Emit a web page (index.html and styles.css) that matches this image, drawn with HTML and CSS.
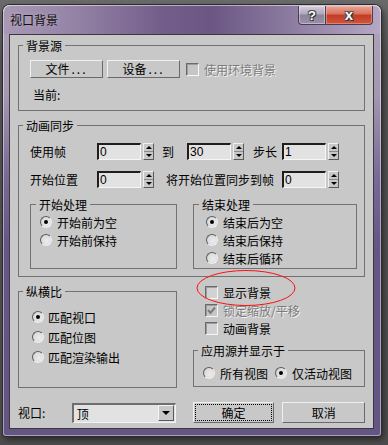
FILE: index.html
```html
<!DOCTYPE html>
<html>
<head>
<meta charset="utf-8">
<link rel="stylesheet" href="styles.css">
</head>
<body>
<div class="win">
  <div class="titlebar">
    <span class="ttext">视口背景</span>
    <div class="tbtns">
      <div class="tb help">?</div>
      <div class="tb close">x</div>
    </div>
  </div>
  <div class="client">
    <div class="group g1">
      <div class="gtitle">背景源</div>
      <div class="btnrow">
        <div class="btn w73">文件<span class="dots">...</span></div>
        <div class="btn w73 ml4">设备<span class="dots">...</span></div>
        <div class="chk dis ml6"><span class="box"></span><span class="lbl">使用环境背景</span></div>
      </div>
      <div class="current">当前:</div>
    </div>

    <div class="group g2">
      <div class="gtitle">动画同步</div>
      <div class="srow">
        <span class="lbl1">使用帧</span>
        <div class="spin"><div class="field">0</div><div class="arrows"><span class="half"><i class="up"></i></span><span class="half"><i class="dn"></i></span></div></div>
        <span class="to">到</span>
        <div class="spin"><div class="field">30</div><div class="arrows"><span class="half"><i class="up"></i></span><span class="half"><i class="dn"></i></span></div></div>
        <span class="step">步长</span>
        <div class="spin"><div class="field">1</div><div class="arrows"><span class="half"><i class="up"></i></span><span class="half"><i class="dn"></i></span></div></div>
      </div>
      <div class="srow r2">
        <span class="lbl1">开始位置</span>
        <div class="spin"><div class="field">0</div><div class="arrows"><span class="half"><i class="up"></i></span><span class="half"><i class="dn"></i></span></div></div>
        <span class="sync">将开始位置同步到帧</span>
        <div class="spin"><div class="field">0</div><div class="arrows"><span class="half"><i class="up"></i></span><span class="half"><i class="dn"></i></span></div></div>
      </div>
      <div class="subs">
        <div class="group sub s1">
          <div class="gtitle">开始处理</div>
          <div class="rlist">
            <div class="rrow"><span class="radio on"></span><span>开始前为空</span></div>
            <div class="rrow"><span class="radio"></span><span>开始前保持</span></div>
          </div>
        </div>
        <div class="group sub s2">
          <div class="gtitle">结束处理</div>
          <div class="rlist">
            <div class="rrow"><span class="radio on"></span><span>结束后为空</span></div>
            <div class="rrow"><span class="radio"></span><span>结束后保持</span></div>
            <div class="rrow"><span class="radio"></span><span>结束后循环</span></div>
          </div>
        </div>
      </div>
    </div>

    <div class="row3">
      <div class="group g3">
        <div class="gtitle">纵横比</div>
        <div class="rlist">
          <div class="rrow"><span class="radio on"></span><span>匹配视口</span></div>
          <div class="rrow"><span class="radio"></span><span>匹配位图</span></div>
          <div class="rrow"><span class="radio"></span><span>匹配渲染输出</span></div>
        </div>
      </div>
      <div class="rcol">
        <div class="crow"><span class="box"></span><span>显示背景</span></div>
        <div class="crow dis"><span class="box"><svg width="11" height="11" viewBox="0 0 11 11"><path d="M2 5 L4.5 8 L9 2.5" fill="none" stroke="#7c7c7c" stroke-width="2"/></svg></span><span class="lbl">锁定缩放/平移</span></div>
        <div class="crow"><span class="box"></span><span>动画背景</span></div>
        <div class="group g4">
          <div class="gtitle">应用源并显示于</div>
          <div class="rrow r4">
            <span class="radio"></span><span>所有视图</span>
            <span class="radio on ml7"></span><span>仅活动视图</span>
          </div>
        </div>
      </div>
    </div>

    <div class="bottom">
      <span class="vlbl">视口:</span>
      <div class="combo"><span class="ctext">顶</span><span class="cbtn"><i class="dn2"></i></span></div>
      <div class="btn ok">确定</div>
      <div class="btn cancel">取消</div>
    </div>

    <svg class="ellipse" width="100" height="37" viewBox="0 0 100 37"><ellipse cx="50" cy="18" rx="49" ry="17.5" fill="none" stroke="#ff1010" stroke-width="1"/></svg>
  </div>
</div>
</body>
</html>
```

FILE: styles.css
```css
html, body {
  margin: 0;
  padding: 0;
}
body {
  width: 388px;
  height: 445px;
  overflow: hidden;
  background: linear-gradient(to bottom, #6a6a6a 0, #555 60px, #4c4c4c 100%);
  font-family: "Noto Sans CJK SC", sans-serif;
  font-size: 12px;
  color: #000;
}
.win {
  position: relative;
  margin: 5px 0 0 3px;
  width: 378px;
  height: 431px;
  box-sizing: border-box;
  padding: 0 7px 0 6px;
  border-radius: 7px 7px 3px 3px;
  background: linear-gradient(to bottom, #b0a4bc 0, #a497b1 90px, #7a6a98 170px, #665688 240px, #655585 100%);
  box-shadow: 0 0 0 1px #2c2c2c, inset 0 0 0 1px rgba(255,255,255,0.45), 2px 3px 6px rgba(0,0,0,0.55);
}
.titlebar {
  height: 29px;
  display: flex;
  justify-content: space-between;
  align-items: flex-start;
  margin: 0 -7px 0 -6px;
  padding: 0 8px 0 7px;
  border-radius: 7px 7px 0 0;
  background: linear-gradient(to right, #a898b5 0%, #9684a7 18%, #735e8b 42%, #6b5684 55%, #8b7a9f 75%, #a595b6 90%, #b6a8c4 100%);
  box-shadow: inset 0 1px 0 rgba(255,255,255,0.5), inset 1px 0 0 rgba(255,255,255,0.4), inset -1px 0 0 rgba(255,255,255,0.4);
}
.ttext {
  margin-top: 8px;
  line-height: 14px;
  color: #111;
  text-shadow: 0 0 4px rgba(255,255,255,0.35);
}
.tbtns {
  display: flex;
  margin-top: 1px;
}
.tb {
  height: 19px;
  box-sizing: border-box;
  display: flex;
  align-items: center;
  justify-content: center;
  color: #fff;
  font-family: "Liberation Sans", sans-serif;
  font-weight: bold;
  font-size: 13px;
  border: 1px solid #473d55;
  border-top: none;
  text-shadow: 0 0 1px #222, 1px 1px 0 #333, -1px -1px 0 #555, 1px -1px 0 #555, -1px 1px 0 #555;
}
.help {
  width: 28px;
  border-radius: 0 0 0 4px;
  background: linear-gradient(to bottom, #d6cfdd 0, #aea5ba 45%, #8c8299 50%, #9a90aa 100%);
  box-shadow: inset 0 0 0 1px rgba(255,255,255,0.35);
}
.close {
  width: 47px;
  border-left: none;
  border-radius: 0 0 4px 0;
  font-size: 15px;
  line-height: 15px;
  padding-bottom: 2px;
  background: linear-gradient(to bottom, #eaa494 0, #d8705e 45%, #c13c24 50%, #d2553d 100%);
  box-shadow: inset 0 0 0 1px rgba(255,220,210,0.35);
}
.client {
  position: relative;
  height: 395px;
  box-sizing: border-box;
  border: 1px solid #3a3a3a;
  background: #c8c8c8;
  padding: 10px 8px 0 8px;
}
.group {
  box-sizing: border-box;
  border: 1px solid #727272;
}
.gtitle {
  width: max-content;
  margin: -7px 0 0 4px;
  padding: 0 3px;
  background: #c8c8c8;
  line-height: 14px;
  height: 14px;
}
.sub .gtitle {
  margin-left: 5px;
}
.g1 {
  height: 66px;
}
.btnrow {
  display: flex;
  align-items: center;
  height: 18px;
  margin-top: 7px;
  padding-left: 11px;
}
.btn {
  box-sizing: border-box;
  height: 18px;
  display: flex;
  align-items: center;
  justify-content: center;
  border: 1px solid;
  border-color: #f0f0f0 #6a6a6a #6a6a6a #f0f0f0;
  background: #c8c8c8;
  line-height: 14px;
}
.dots {
  letter-spacing: 2px;
  margin-left: 2px;
}
.w73 { width: 73px; }
.ml4 { margin-left: 4px; }
.ml6 { margin-left: 6px; }
.ml7 { margin-left: 7px; }
.chk, .crow {
  display: flex;
  align-items: center;
}
.box {
  width: 13px;
  height: 13px;
  box-sizing: border-box;
  border: 1px solid;
  border-color: #6a6a6a #f6f6f6 #f6f6f6 #6a6a6a;
  box-shadow: inset 1px 1px 0 #9c9c9c;
  background: #d2d2d2;
  margin-right: 5px;
  display: flex;
  align-items: center;
  justify-content: center;
}
.dis .box {
  background: #c6c6c6;
}
.dis .lbl {
  color: #7c7c7c;
  text-shadow: 1px 1px 0 #f2f2f2;
}
.current {
  margin-top: 10px;
  padding-left: 14px;
  line-height: 14px;
}
.g2 {
  margin-top: 14px;
  height: 152px;
}
.srow {
  display: flex;
  align-items: center;
  height: 17px;
  margin-top: 10px;
  padding-left: 11px;
}
.srow.r2 {
  margin-top: 11px;
}
.lbl1 {
  width: 67px;
}
.spin {
  display: flex;
  gap: 2px;
}
.field {
  width: 44px;
  height: 17px;
  box-sizing: border-box;
  border: solid;
  border-width: 2px 1px 1px 2px;
  border-color: #1e1e1e #f6f6f6 #f6f6f6 #1e1e1e;
  background: #e2e2e2;
  font-family: "Liberation Sans", sans-serif;
  font-size: 12px;
  line-height: 14px;
  padding-left: 1px;
}
.arrows {
  width: 11px;
  height: 17px;
  box-sizing: border-box;
  border: 1px solid;
  border-color: #f0f0f0 #5a5a5a #5a5a5a #f0f0f0;
  background: #c8c8c8;
  display: flex;
  flex-direction: column;
}
.half {
  flex: 1;
  display: flex;
  align-items: center;
  justify-content: center;
}
.half + .half {
  border-top: 1px solid #8a8a8a;
}
.up {
  width: 0;
  height: 0;
  border-left: 3px solid transparent;
  border-right: 3px solid transparent;
  border-bottom: 3px solid #000;
}
.dn {
  width: 0;
  height: 0;
  border-left: 3px solid transparent;
  border-right: 3px solid transparent;
  border-top: 3px solid #000;
}
.to {
  margin: 0 13px 0 8px;
}
.step {
  margin: 0 5px 0 9px;
}
.sync {
  margin: 0 8px 0 12px;
}
.subs {
  display: flex;
  gap: 16px;
  margin-top: 16px;
  padding-left: 11px;
}
.s1 {
  width: 147px;
  height: 65px;
}
.s2 {
  width: 164px;
  height: 65px;
}
.rlist {
  margin-top: 1px;
}
.s1 .rlist { padding-left: 9px; }
.s2 .rlist { padding-left: 12px; }
.rrow {
  display: flex;
  align-items: center;
  height: 18px;
}
.radio {
  width: 12px;
  height: 12px;
  box-sizing: border-box;
  border-radius: 50%;
  border: 1px solid;
  border-color: #5c5c5c #eeeeee #eeeeee #5c5c5c;
  background: radial-gradient(circle at 60% 60%, #ececec 0, #dadada 70%);
  margin-right: 5px;
  position: relative;
  flex: none;
}
.radio.on::after {
  content: "";
  position: absolute;
  left: 3px;
  top: 3px;
  width: 4px;
  height: 4px;
  border-radius: 50%;
  background: #000;
}
.row3 {
  display: flex;
  align-items: flex-start;
  margin-top: 6px;
}
.g3 {
  width: 159px;
  height: 97px;
  margin-top: 8px;
}
.g3 .rlist {
  margin-top: 8px;
  padding-left: 13px;
}
.g3 .rrow {
  height: 20px;
}
.g3 .radio {
  margin-right: 4px;
}
.rcol {
  margin-left: 16px;
  width: 172px;
}
.crow {
  height: 18px;
  padding-left: 12px;
}
.g4 {
  margin-top: 13px;
  height: 37px;
}
.r4 {
  margin-top: 6px;
  padding-left: 9px;
}
.bottom {
  display: flex;
  align-items: center;
  height: 21px;
  margin-top: 14px;
}
.vlbl {
  width: 54px;
}
.combo {
  width: 104px;
  height: 20px;
  box-sizing: border-box;
  border: solid;
  border-width: 2px 1px 1px 2px;
  border-color: #6e6e6e #f2f2f2 #f2f2f2 #6e6e6e;
  background: #e2e2e2;
  display: flex;
  align-items: center;
  justify-content: space-between;
  padding: 0 1px 0 3px;
}
.cbtn {
  width: 16px;
  height: 16px;
  box-sizing: border-box;
  border: 1px solid;
  border-color: #f4f4f4 #5a5a5a #5a5a5a #f4f4f4;
  background: #c8c8c8;
  display: flex;
  align-items: center;
  justify-content: center;
}
.dn2 {
  width: 0;
  height: 0;
  border-left: 4px solid transparent;
  border-right: 4px solid transparent;
  border-top: 4px solid #000;
}
.ok {
  width: 82px;
  height: 21px;
  margin-left: 17px;
  outline: 1px dotted #000;
  outline-offset: -3px;
}
.cancel {
  width: 83px;
  height: 21px;
  margin-left: 8px;
}
.ellipse {
  position: absolute;
  left: 186px;
  top: 235px;
}
```
